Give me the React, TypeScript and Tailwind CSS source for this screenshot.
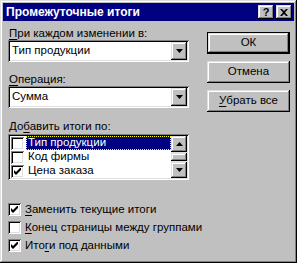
import React from "react";

const raised =
  "shadow-[inset_-1px_-1px_#000,inset_1px_1px_#dfdfdf,inset_-2px_-2px_#808080,inset_2px_2px_#fff]";
const sunken =
  "shadow-[inset_1px_1px_#808080,inset_-1px_-1px_#fff,inset_2px_2px_#000,inset_-2px_-2px_#dfdfdf]";

function U({ children }: { children: React.ReactNode }) {
  return <span className="underline underline-offset-2">{children}</span>;
}

function Arrow({ up }: { up?: boolean }) {
  return (
    <svg width="7" height="4" viewBox="0 0 7 4" className={up ? "rotate-180" : ""}>
      <path d="M0 0h7L3.5 4z" fill="#000" />
    </svg>
  );
}

function Check({ on }: { on: boolean }) {
  return (
    <div className={`w-[13px] h-[13px] bg-white shrink-0 flex items-center justify-center ${sunken}`}>
      {on && (
        <svg width="7" height="7" viewBox="0 0 7 7">
          <path d="M0 2v3l2 2 5-5V-1L2 4z" fill="#000" />
        </svg>
      )}
    </div>
  );
}

function Combo({ value }: { value: string }) {
  return (
    <div className={`h-[22px] bg-white flex items-center p-[2px] ${sunken}`}>
      <span className="flex-1 pl-[2px]">{value}</span>
      <div className={`w-[16px] h-[18px] bg-[#c0c0c0] flex items-center justify-center ${raised}`}>
        <Arrow />
      </div>
    </div>
  );
}

function Button({ children, primary }: { children: React.ReactNode; primary?: boolean }) {
  return (
    <div className={`h-[22px] ${primary ? "border border-black" : ""}`}>
      <div className={`h-full flex items-center justify-center ${raised}`}>{children}</div>
    </div>
  );
}

export default function App() {
  const fields = [
    { name: "Тип продукции", on: false, sel: true },
    { name: "Код фирмы", on: false, sel: false },
    { name: "Цена заказа", on: true, sel: false },
  ];

  return (
    <div
      className={`w-[297px] h-[263px] bg-[#c0c0c0] p-[3px] text-[11.5px] text-black whitespace-nowrap ${raised}`}
      style={{ fontFamily: '"Liberation Sans", Arial, sans-serif' }}
    >
      <div className="h-[18px] bg-[#000080] flex items-center pl-[3px] pr-[2px]">
        <span className="flex-1 text-white font-bold text-[12px]">Промежуточные итоги</span>
        <div className={`w-[16px] h-[14px] bg-[#c0c0c0] flex items-center justify-center font-bold text-[11px] ${raised}`}>
          ?
        </div>
        <div className={`w-[16px] h-[14px] ml-[2px] bg-[#c0c0c0] flex items-center justify-center ${raised}`}>
          <svg width="8" height="7" viewBox="0 0 8 7">
            <path d="M0 0h2l2 2 2-2h2L5 3.5 8 7H6L4 5 2 7H0l3-3.5z" fill="#000" />
          </svg>
        </div>
      </div>

      <div className="flex pl-[5px] pr-[4px]">
        <div className="w-[181px] flex flex-col">
          <div className="h-[13px] mt-[6px] pl-[1px] leading-[13px]">
            <U>П</U>ри каждом изменении в:
          </div>
          <Combo value="Тип продукции" />

          <div className="h-[13px] mt-[11px] pl-[1px] leading-[13px]">
            <U>О</U>перация:
          </div>
          <Combo value="Сумма" />

          <div className="h-[13px] mt-[12px] mb-[1px] pl-[1px] leading-[13px]">
            До<U>б</U>авить итоги по:
          </div>
          <div className={`h-[46px] bg-white flex p-[2px] ${sunken}`}>
            <div className="flex-1 flex flex-col">
              {fields.map((f) => (
                <div key={f.name} className="h-[14px] flex items-center pl-[1px]">
                  <Check on={f.on} />
                  <span
                    className={`flex-1 h-full flex items-center pl-[2px] ml-[2px] ${
                      f.sel ? "bg-[#000080] text-white outline outline-1 outline-dotted outline-[#ffff00] -outline-offset-1" : ""
                    }`}
                  >
                    {f.name}
                  </span>
                </div>
              ))}
            </div>
            <div className="w-[16px] flex flex-col bg-[#dfdfdf]">
              <div className={`h-[16px] bg-[#c0c0c0] flex items-center justify-center ${raised}`}>
                <Arrow up />
              </div>
              <div className="flex-1 flex flex-col justify-center">
                <div className={`h-[8px] bg-[#c0c0c0] ${raised}`} />
              </div>
              <div className={`h-[16px] bg-[#c0c0c0] flex items-center justify-center ${raised}`}>
                <Arrow />
              </div>
            </div>
          </div>

          <div className="mt-[23px] flex flex-col gap-[5px]">
            <div className="h-[13px] flex items-center gap-[4px]">
              <Check on />
              <span>
                <U>З</U>аменить текущие итоги
              </span>
            </div>
            <div className="h-[13px] flex items-center gap-[4px]">
              <Check on={false} />
              <span>
                <U>К</U>онец страницы между группами
              </span>
            </div>
            <div className="h-[13px] flex items-center gap-[4px]">
              <Check on />
              <span>
                Ито<U>г</U>и под данными
              </span>
            </div>
          </div>
        </div>

        <div className="flex-1 flex flex-col gap-[7px] pl-[18px] pt-[11px]">
          <Button primary>ОК</Button>
          <Button>Отмена</Button>
          <Button>
            <U>У</U>брать все
          </Button>
        </div>
      </div>
    </div>
  );
}
